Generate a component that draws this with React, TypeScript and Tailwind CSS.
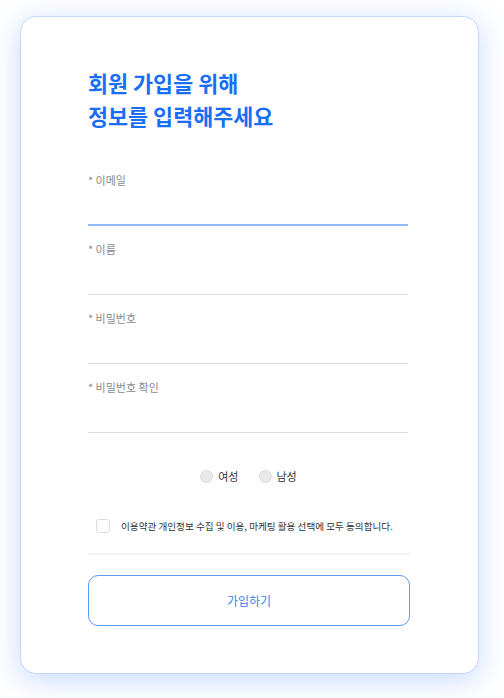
import React from "react";

const font = { fontFamily: '"Noto Sans CJK KR", "Noto Sans", sans-serif' };

function Field({ label, active }: { label: string; active?: boolean }) {
  return (
    <div className="flex flex-col">
      <label className="text-[11px] leading-4 text-[#8a8a8a]">{label}</label>
      {active ? (
        <div className="h-[38px] w-[320px] border-b-2 border-b-[#93b9fb]" />
      ) : (
        <div className="h-[38px] w-[320px] border-b border-b-[#dcdcdc]" />
      )}
    </div>
  );
}

export default function App() {
  return (
    <div className="min-h-[698px] w-full bg-white pt-4 pl-5" style={font}>
      <div className="flex h-[658px] w-[459px] flex-col rounded-[16px] border border-[#c4d8fc] bg-white px-[67px] pt-[49px] shadow-[0_6px_30px_rgba(90,145,255,0.34)]">
        <h1 className="text-[21.8px] font-bold leading-[33px] text-[#1a6ef5]">
          회원 가입을 위해
          <br />
          정보를 입력해주세요
        </h1>
        <div className="mt-[40px] flex flex-col gap-[15px]">
          <Field label="* 이메일" active />
          <Field label="* 이름" />
          <Field label="* 비밀번호" />
          <Field label="* 비밀번호 확인" />
        </div>
        <div className="mt-[33px] flex h-5 items-center justify-center gap-5 pr-[2px]">
          <label className="flex items-center gap-[5px]">
            <span className="h-[13px] w-[13px] rounded-full border border-[#dadada] bg-[#e9e9e9]" />
            <span className="text-[11px] text-[#333]">여성</span>
          </label>
          <label className="flex items-center gap-[5px]">
            <span className="h-[13px] w-[13px] rounded-full border border-[#dadada] bg-[#e9e9e9]" />
            <span className="text-[11px] text-[#333]">남성</span>
          </label>
        </div>
        <div className="mt-[32px] flex h-4 items-center pl-2">
          <span className="h-[14px] w-[14px] rounded-[3px] border border-[#dcdcdc] bg-white" />
          <span className="ml-[11px] text-[9.6px] text-[#333]">
            이용약관 개인정보 수집 및 이용, 마케팅 활용 선택에 모두 동의합니다.
          </span>
        </div>
        <div className="mt-[19px] h-[2px] w-[322px] bg-[#f4f4f4]" />
        <button className="mt-[20px] flex h-[51px] w-[322px] items-center justify-center rounded-[10px] border border-[#5b98f7] bg-white text-[12px] text-[#3a82f2]">
          가입하기
        </button>
      </div>
    </div>
  );
}
